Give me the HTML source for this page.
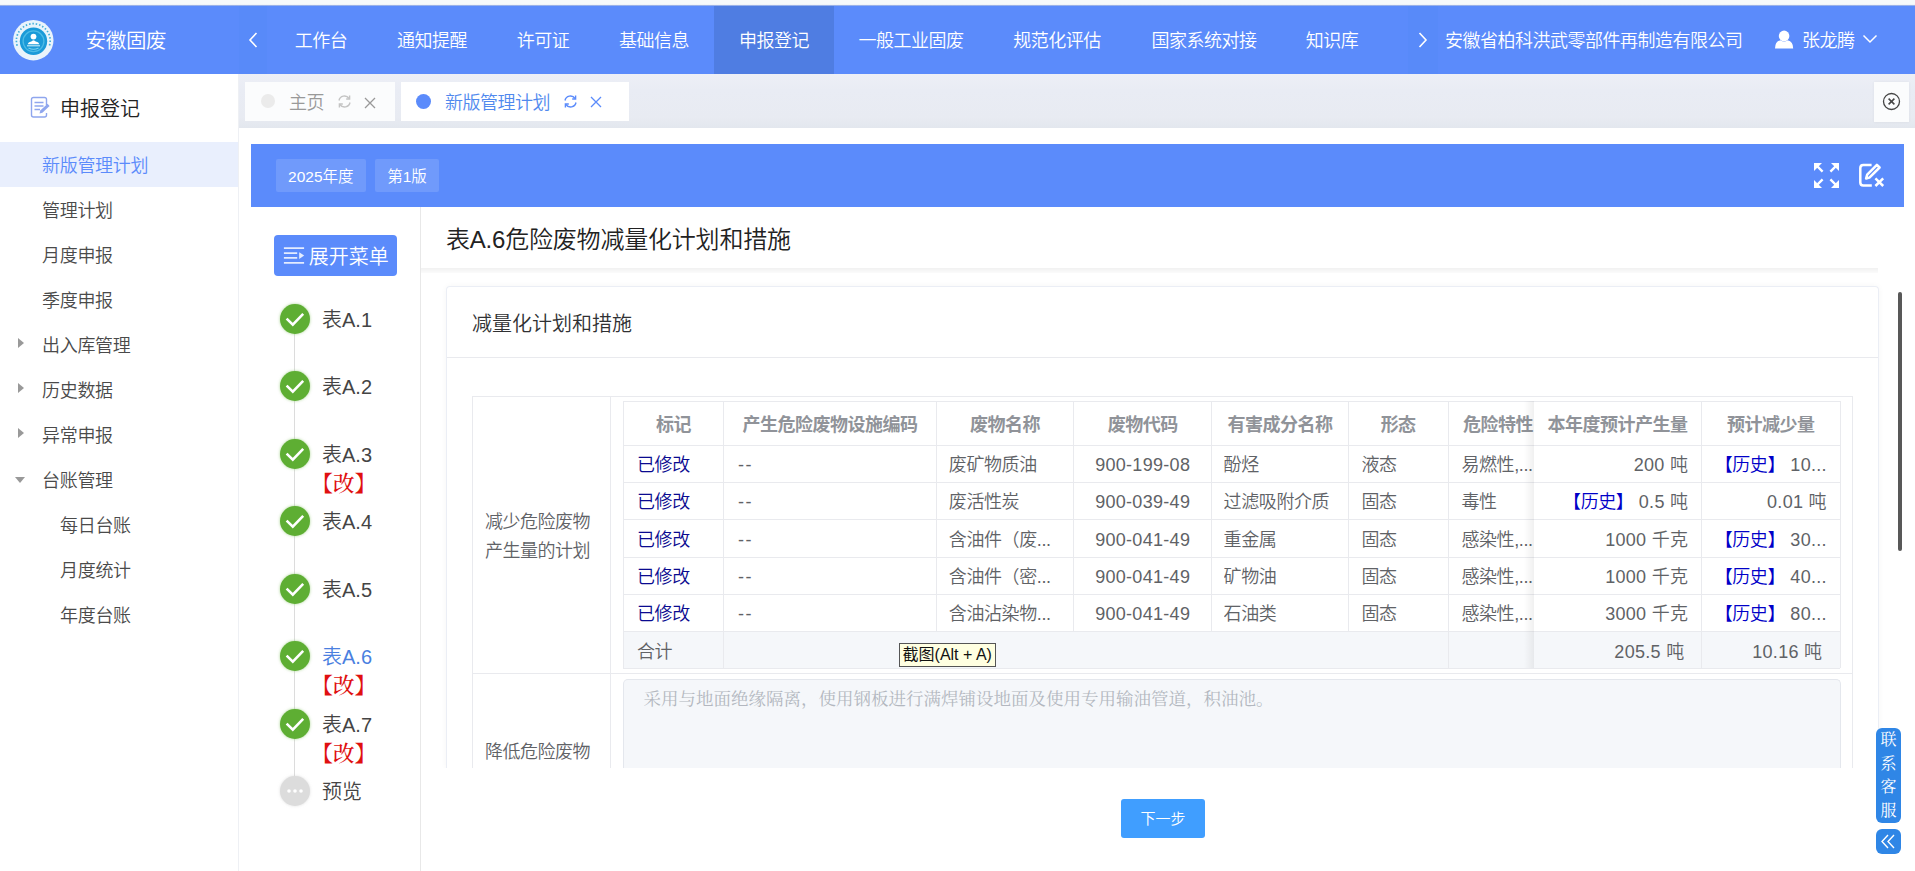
<!DOCTYPE html>
<html lang="zh-CN">
<head>
<meta charset="utf-8">
<title>安徽固废</title>
<style>
*{box-sizing:border-box;margin:0;padding:0}
html,body{width:1915px;height:871px;overflow:hidden;background:#fff}
body{position:relative;font-family:"Liberation Sans","Noto Sans CJK SC",sans-serif;font-size:18px;color:#333;font-weight:350}
.abs{position:absolute;white-space:nowrap}
/* top strip */
#strip{left:0;top:0;width:1915px;height:6px;background:linear-gradient(#f6f9fb 0,#f6f9fb 4.4px,#c3cbdc 5.3px,#5b8bfb 5.8px)}
/* header */
#hdr{left:0;top:6px;width:1915px;height:68px;background:#5b8bfb}
#hdr .t{position:absolute;top:1px;height:68px;line-height:68px;color:#fff;font-size:18px;letter-spacing:-0.5px;white-space:nowrap}
#hdr .nav{transform:translateX(-50%)}
#navact{left:714px;top:0;width:120px;height:68px;background:#4f7de2}
#larr{left:239px;top:0;width:28px;height:68px;background:#588af9}
#rarr{left:1408px;top:0;width:30px;height:68px;background:#588af9}
/* sidebar */
#side{left:0;top:74px;width:239px;height:797px;background:#fff;border-right:1px solid #eef0f4}
#side .it{position:absolute;left:42px;height:45px;line-height:45px;margin-top:2px;font-size:18px;letter-spacing:-0.3px;color:#4a4a4a;white-space:nowrap}
#side .sub{left:60px}
#side .tri{position:absolute;left:17.5px;width:0;height:0}
#sideact{left:0;top:68px;width:238px;height:45px;background:#e9effd}
/* tab bar */
#tabs{left:239px;top:74px;width:1676px;height:54px;background:linear-gradient(#edeff6 0,#e9ecf4 30%,#e8ebf2 80%,#e3e7ee 100%)}
.tab{position:absolute;top:8px;height:39px;background:#fff}
/* banner */
#banner{left:251px;top:144px;width:1653px;height:63px;background:#5b8bfb}
.tag{position:absolute;top:15.3px;height:32.7px;line-height:35px;background:rgba(255,255,255,.13);color:#fff;font-size:15.5px;text-align:center;border-radius:2px}
/* steps */
#steps{left:251px;top:207px;width:170px;height:664px;border-right:1px solid #e8e8e8}
.ck{position:absolute;left:28.8px;width:30px;height:30px;border-radius:50%;background:#5eae33;box-shadow:0 0 3px rgba(94,174,51,.55)}
.ck svg{position:absolute;left:0;top:0}
.sl{position:absolute;left:71px;font-size:20px;color:#444;line-height:26px;white-space:nowrap}
.gai{position:absolute;left:60.5px;margin-top:1px;font-family:"Liberation Serif","Noto Serif CJK SC",serif;font-weight:500;font-size:21.5px;color:#e01010;line-height:24px;white-space:nowrap}
/* main */
.th{position:absolute;height:41px;line-height:41px;font-weight:700;color:#909399;font-size:18px;letter-spacing:-0.5px;text-align:center;white-space:nowrap;overflow:hidden}
.td{position:absolute;height:37px;line-height:37px;font-size:18px;letter-spacing:-0.4px;color:#606266;white-space:nowrap;overflow:hidden}
.num{letter-spacing:0.45px}
.num .blue{letter-spacing:-0.4px}
.lbl{font-size:18px;letter-spacing:-0.5px;line-height:29.1px;color:#606266}
.num{letter-spacing:0.45px}
.num .blue{letter-spacing:-0.4px}
.lbl{font-size:18px;letter-spacing:-0.5px;line-height:29.1px;color:#606266}
.num{letter-spacing:0.45px}
.num .blue{letter-spacing:-0.4px}
.lbl{font-size:18px;letter-spacing:-0.5px;line-height:29.1px;color:#606266}
.num{letter-spacing:0.3px}
.num .blue{letter-spacing:-0.4px}
.lbl{font-size:18px;letter-spacing:-0.5px;line-height:29.1px;color:#606266}
.vl{position:absolute;width:1px;background:#e9eaee}
.hl{position:absolute;height:1px;background:#e9eaee}
.blue{color:#0000c8}
</style>
</head>
<body>
<div id="strip" class="abs"></div>

<!-- HEADER -->
<div id="hdr" class="abs">
  <div id="navact" class="abs"></div>
  <div id="larr" class="abs"></div>
  <div id="rarr" class="abs"></div>
  <svg class="abs" style="left:12px;top:13px" width="43" height="43" viewBox="0 0 43 43">
    <circle cx="21.3" cy="21.2" r="20.2" fill="#e9f4fb"/>
    <circle cx="21.3" cy="21.6" r="16.9" fill="none" stroke="#43afdb" stroke-width="1.7" stroke-dasharray="1.5 1.9"/>
    <path d="M5.5 27.5 A16.9 16.9 0 0 0 37.1 27.5" fill="none" stroke="#e9f4fb" stroke-width="3.4"/>
    <circle cx="21.5" cy="22.3" r="13.7" fill="#1a9ad8"/>
    <circle cx="21.5" cy="22.3" r="10.4" fill="none" stroke="#4dbbe6" stroke-width="1.3"/>
    <circle cx="21.5" cy="17.6" r="2.9" fill="#fff"/>
    <path d="M15.6 25.2 Q16.8 22.2 19 22.8 Q21.5 19.8 24 22.8 Q26.2 22.2 27.4 25.2 Z" fill="#fff"/>
    <path d="M15 26.8 H28" stroke="#c9ecf8" stroke-width="1.1"/>
    <path d="M16.5 29 Q21.5 31.5 26.5 29" stroke="#7fd2ee" stroke-width="1.2" fill="none"/>
  </svg>
  <div class="t" style="left:85.5px;font-size:20.5px;letter-spacing:-0.3px">安徽固废</div>
  <svg class="abs" style="left:246px;top:24px" width="14" height="20" viewBox="0 0 14 20"><path d="M10.5 3 L4 10 L10.5 17" fill="none" stroke="#fff" stroke-width="1.6"/></svg>
  <div class="t nav" style="left:321px">工作台</div>
  <div class="t nav" style="left:432px">通知提醒</div>
  <div class="t nav" style="left:543px">许可证</div>
  <div class="t nav" style="left:654px">基础信息</div>
  <div class="t nav" style="left:774px">申报登记</div>
  <div class="t nav" style="left:911px">一般工业固废</div>
  <div class="t nav" style="left:1057px">规范化评估</div>
  <div class="t nav" style="left:1204px">国家系统对接</div>
  <div class="t nav" style="left:1332px">知识库</div>
  <svg class="abs" style="left:1416px;top:24px" width="14" height="20" viewBox="0 0 14 20"><path d="M3.5 3 L10 10 L3.5 17" fill="none" stroke="#fff" stroke-width="1.6"/></svg>
  <div class="t" style="left:1445px">安徽省柏科洪武零部件再制造有限公司</div>
  <svg class="abs" style="left:1774px;top:23px" width="20" height="21" viewBox="0 0 20 21"><circle cx="10.1" cy="6.9" r="5.3" fill="#fff"/><path d="M1 19.6 Q1 12.4 6.5 11.2 Q10.1 13.6 13.7 11.2 Q19.2 12.4 19.2 19.6 Z" fill="#fff"/></svg>
  <div class="t" style="left:1802px">张龙腾</div>
  <svg class="abs" style="left:1862px;top:28px" width="16" height="10" viewBox="0 0 16 10"><path d="M1.5 1.5 L8 8 L14.5 1.5" fill="none" stroke="#fff" stroke-width="1.5"/></svg>
</div>

<!-- SIDEBAR -->
<div id="side" class="abs">
  <svg class="abs" style="left:30px;top:22px" width="22" height="23" viewBox="0 0 22 23">
    <path d="M16.5 9 V3.5 Q16.5 1.5 14.5 1.5 H3.5 Q1.5 1.5 1.5 3.5 V19 Q1.5 21 3.5 21 H14.5 Q16.5 21 16.5 19 V17" fill="none" stroke="#8fa6ee" stroke-width="1.4"/>
    <path d="M4.5 6.5 H13.5 M4.5 10 H13.5 M4.5 13.5 H10" stroke="#8fa6ee" stroke-width="1.4"/>
    <path d="M9.5 17.5 L10.3 14.6 L17.5 7.8 L19.6 9.9 L12.4 16.8 Z" fill="#8fa6ee"/>
  </svg>
  <div class="abs" style="left:60px;top:19px;font-size:20px;line-height:32px;color:#222">申报登记</div>
  <div id="sideact" class="abs"></div>
  <div class="it" style="top:68px;color:#5b8bfb">新版管理计划</div>
  <div class="it" style="top:113px">管理计划</div>
  <div class="it" style="top:158px">月度申报</div>
  <div class="it" style="top:203px">季度申报</div>
  <div class="it" style="top:248px">出入库管理</div>
  <div class="it" style="top:293px">历史数据</div>
  <div class="it" style="top:338px">异常申报</div>
  <div class="it" style="top:383px">台账管理</div>
  <div class="it sub" style="top:428px">每日台账</div>
  <div class="it sub" style="top:473px">月度统计</div>
  <div class="it sub" style="top:518px">年度台账</div>
  <div class="tri" style="top:264px;border-left:6px solid #999;border-top:5px solid transparent;border-bottom:5px solid transparent"></div>
  <div class="tri" style="top:309px;border-left:6px solid #999;border-top:5px solid transparent;border-bottom:5px solid transparent"></div>
  <div class="tri" style="top:354px;border-left:6px solid #999;border-top:5px solid transparent;border-bottom:5px solid transparent"></div>
  <div class="tri" style="top:403px;left:15px;border-top:6px solid #999;border-left:5px solid transparent;border-right:5px solid transparent"></div>
</div>

<!-- TABS -->
<div id="tabs" class="abs">
  <div class="tab" style="left:6px;width:150px;background:#fbfcfd">
    <div class="abs" style="left:16px;top:12px;width:14px;height:14px;border-radius:50%;background:#ebebeb"></div>
    <div class="abs" style="left:44px;top:1.5px;line-height:39px;font-size:18px;letter-spacing:-0.5px;color:#999">主页</div>
    <svg class="abs" style="left:92px;top:12px" width="15" height="15" viewBox="0 0 15 15"><path d="M2 6.5 A5.5 5.5 0 0 1 12 4.5 M13 8.5 A5.5 5.5 0 0 1 3 10.5" fill="none" stroke="#c4c4c4" stroke-width="1.4"/><path d="M12.6 1.5 V5 H9.2 M2.4 13.5 V10 H5.8" fill="none" stroke="#c4c4c4" stroke-width="1.4"/></svg>
    <svg class="abs" style="left:119px;top:14.5px" width="12" height="12" viewBox="0 0 12 12"><path d="M1 1 L11 11 M11 1 L1 11" stroke="#999" stroke-width="1.3"/></svg>
  </div>
  <div class="tab" style="left:162px;width:228px">
    <div class="abs" style="left:15px;top:12px;width:15px;height:15px;border-radius:50%;background:#5b8bfb"></div>
    <div class="abs" style="left:44px;top:1.5px;line-height:39px;font-size:18px;letter-spacing:-0.5px;color:#5089ee">新版管理计划</div>
    <svg class="abs" style="left:162px;top:12px" width="15" height="15" viewBox="0 0 15 15"><path d="M2 6.5 A5.5 5.5 0 0 1 12 4.5 M13 8.5 A5.5 5.5 0 0 1 3 10.5" fill="none" stroke="#5b8bfb" stroke-width="1.4"/><path d="M12.6 1.5 V5 H9.2 M2.4 13.5 V10 H5.8" fill="none" stroke="#5b8bfb" stroke-width="1.4"/></svg>
    <svg class="abs" style="left:189px;top:14px" width="12" height="12" viewBox="0 0 12 12"><path d="M1 1 L11 11 M11 1 L1 11" stroke="#5b8bfb" stroke-width="1.3"/></svg>
  </div>
  <div class="tab" style="left:1635px;top:7.5px;height:40px;width:35px;background:#fbfcfd;box-shadow:0 0 3px rgba(0,0,0,.06)">
    <svg class="abs" style="left:8px;top:10px" width="19" height="19" viewBox="0 0 19 19"><circle cx="9.5" cy="9.5" r="8" fill="none" stroke="#444" stroke-width="1.3"/><path d="M6.6 6.6 L12.4 12.4 M12.4 6.6 L6.6 12.4" stroke="#444" stroke-width="1.5"/></svg>
  </div>
</div>

<!-- BANNER -->
<div id="banner" class="abs">
  <div class="tag" style="left:24.8px;width:90px">2025年度</div>
  <div class="tag" style="left:124px;width:64px">第1版</div>
  <svg class="abs" style="left:1562px;top:18px" width="27" height="27" viewBox="0 0 27 27">
    <g fill="#fff" stroke="none">
      <path d="M1 1 H9 L1 9 Z"/><path d="M26 1 V9 L18 1 Z"/><path d="M1 26 V18 L9 26 Z"/><path d="M26 26 H18 L26 18 Z"/>
    </g>
    <g fill="none" stroke="#fff" stroke-width="2.4">
      <path d="M3 3 L9.6 9.6 M24 3 L17.4 9.6 M3 24 L9.6 17.4 M24 24 L17.4 17.4"/>
    </g>
  </svg>
  <svg class="abs" style="left:1605px;top:16px" width="32" height="30" viewBox="0 0 32 30">
    <g fill="none" stroke="#fff" stroke-width="2.5" stroke-linejoin="round">
      <path d="M15.6 5.1 H7.3 Q4.3 5.1 4.3 8.1 V22.5 Q4.3 25.5 7.3 25.5 H15.8"/>
      <path d="M20.9 4.8 L23.6 7.5 L13.4 17.6 L10.1 18.5 L11.2 14.6 Z"/>
      <path d="M19.4 18.4 L27.2 26 M27.2 18.4 L19.4 26"/>
    </g>
  </svg>
</div>

<!-- STEPS -->
<div id="steps" class="abs">
  <div class="abs" style="left:43px;top:112px;width:1px;height:472px;background:#dcdcdc"></div>
  <div class="abs" style="left:23px;top:28px;width:122.8px;height:41px;border-radius:4px;background:#5b8bfb"></div>
  <svg class="abs" style="left:32px;top:39px" width="23" height="19" viewBox="0 0 23 19"><path d="M0.9 2.1 H21.1 M0.9 7.1 H14.2 M0.9 11.9 H14.2 M0.9 16.9 H21.1" stroke="#e3ecff" stroke-width="1.7"/><path d="M16.2 6.2 L21.2 9.6 L16.2 13 Z" fill="#e3ecff"/></svg>
  <div class="abs" style="left:57.8px;top:30.3px;line-height:40px;font-size:20px;color:#fff">展开菜单</div>
  <div class="ck" style="top:97px"><svg width="30" height="30" viewBox="0 0 30 30"><path d="M6.6 14.6 L12.8 20.6 L23.2 9.9" fill="none" stroke="#fff" stroke-width="2.6"/></svg></div>
  <div class="sl" style="top:100px">表A.1</div>
  <div class="ck" style="top:164px"><svg width="30" height="30" viewBox="0 0 30 30"><path d="M6.6 14.6 L12.8 20.6 L23.2 9.9" fill="none" stroke="#fff" stroke-width="2.6"/></svg></div>
  <div class="sl" style="top:167px">表A.2</div>
  <div class="ck" style="top:232px"><svg width="30" height="30" viewBox="0 0 30 30"><path d="M6.6 14.6 L12.8 20.6 L23.2 9.9" fill="none" stroke="#fff" stroke-width="2.6"/></svg></div>
  <div class="sl" style="top:235px">表A.3</div>
  <div class="gai" style="top:264px">【改】</div>
  <div class="ck" style="top:299px"><svg width="30" height="30" viewBox="0 0 30 30"><path d="M6.6 14.6 L12.8 20.6 L23.2 9.9" fill="none" stroke="#fff" stroke-width="2.6"/></svg></div>
  <div class="sl" style="top:302px">表A.4</div>
  <div class="ck" style="top:367px"><svg width="30" height="30" viewBox="0 0 30 30"><path d="M6.6 14.6 L12.8 20.6 L23.2 9.9" fill="none" stroke="#fff" stroke-width="2.6"/></svg></div>
  <div class="sl" style="top:370px">表A.5</div>
  <div class="ck" style="top:434px"><svg width="30" height="30" viewBox="0 0 30 30"><path d="M6.6 14.6 L12.8 20.6 L23.2 9.9" fill="none" stroke="#fff" stroke-width="2.6"/></svg></div>
  <div class="sl" style="top:437px;color:#4a7fe0">表A.6</div>
  <div class="gai" style="top:466px">【改】</div>
  <div class="ck" style="top:502px"><svg width="30" height="30" viewBox="0 0 30 30"><path d="M6.6 14.6 L12.8 20.6 L23.2 9.9" fill="none" stroke="#fff" stroke-width="2.6"/></svg></div>
  <div class="sl" style="top:505px">表A.7</div>
  <div class="gai" style="top:534px">【改】</div>
  <div class="ck" style="top:569px;background:#dcdcdc;box-shadow:0 0 3px rgba(200,200,200,.6)"><svg width="30" height="30" viewBox="0 0 30 30"><circle cx="9" cy="15" r="1.8" fill="#fff"/><circle cx="15" cy="15" r="1.8" fill="#fff"/><circle cx="21" cy="15" r="1.8" fill="#fff"/></svg></div>
  <div class="sl" style="top:572px">预览</div>
</div>

<!-- MAIN -->
<div class="abs" style="left:446px;top:222px;font-size:24px;letter-spacing:-0.2px;line-height:36px;color:#222">表A.6危险废物减量化计划和措施</div>
<div class="abs" style="left:421px;top:268px;width:1457px;height:5px;background:linear-gradient(#f1f1f1,#fbfbfb)"></div>
<div class="abs" style="left:446px;top:285.5px;width:1433px;height:483px;border:1px solid #ebeef5;border-bottom:none;border-radius:4px 4px 0 0;box-shadow:0 0 6px rgba(0,0,0,.04)"></div>
<div class="abs" style="left:472px;top:309px;font-size:20px;line-height:30px;color:#303133">减量化计划和措施</div>
<div class="hl" style="left:447px;top:357px;width:1431px"></div>
<div class="hl" style="left:472px;top:396px;width:1381px"></div>
<div class="vl" style="left:472px;top:396px;height:372px"></div>
<div class="vl" style="left:610px;top:396px;height:372px"></div>
<div class="vl" style="left:1852px;top:396px;height:372px"></div>
<div class="hl" style="left:472px;top:672.5px;width:1381px"></div>
<div class="abs lbl" style="left:485px;top:508px">减少危险废物<br>产生量的计划</div>
<div class="abs lbl" style="left:485px;top:737.5px">降低危险废物</div>
<div class="abs" style="left:623.4px;top:631.4px;width:1217.0px;height:37.1px;background:#f5f7fa"></div>
<div class="hl" style="left:623.4px;top:400.9px;width:1217.0px"></div>
<div class="hl" style="left:623.4px;top:444.8px;width:1217.0px"></div>
<div class="hl" style="left:623.4px;top:482.1px;width:1217.0px"></div>
<div class="hl" style="left:623.4px;top:519.4px;width:1217.0px"></div>
<div class="hl" style="left:623.4px;top:556.7px;width:1217.0px"></div>
<div class="hl" style="left:623.4px;top:593.9px;width:1217.0px"></div>
<div class="hl" style="left:623.4px;top:630.9px;width:1217.0px"></div>
<div class="hl" style="left:623.4px;top:667.5px;width:1217.0px"></div>
<div class="vl" style="left:622.9px;top:400.9px;height:267.1px"></div>
<div class="vl" style="left:723.1px;top:400.9px;height:267.1px"></div>
<div class="vl" style="left:936.0px;top:400.9px;height:230.5px"></div>
<div class="vl" style="left:1073.1px;top:400.9px;height:230.5px"></div>
<div class="vl" style="left:1211.3px;top:400.9px;height:230.5px"></div>
<div class="vl" style="left:1347.7px;top:400.9px;height:230.5px"></div>
<div class="vl" style="left:1447.6px;top:400.9px;height:267.1px"></div>
<div class="vl" style="left:1700.8px;top:400.9px;height:267.1px"></div>
<div class="vl" style="left:1839.9px;top:400.9px;height:267.1px"></div>
<div class="th" style="left:623.4px;top:404.9px;width:100.2px">标记</div>
<div class="th" style="left:723.6px;top:404.9px;width:212.9px">产生危险废物设施编码</div>
<div class="th" style="left:936.5px;top:404.9px;width:137.1px">废物名称</div>
<div class="th" style="left:1073.6px;top:404.9px;width:138.2px">废物代码</div>
<div class="th" style="left:1211.8px;top:404.9px;width:136.4px">有害成分名称</div>
<div class="th" style="left:1348.2px;top:404.9px;width:99.9px">形态</div>
<div class="th" style="left:1448.1px;top:404.9px;width:85.7px;text-align:left;padding-left:15px">危险特性</div>
<div class="td" style="left:637.0px;top:446.9px;width:86.1px;color:#0a0a90">已修改</div>
<div class="td" style="left:738.0px;top:446.9px;width:198.0px;letter-spacing:1.5px">--</div>
<div class="td" style="left:948.8px;top:446.9px;width:124.3px">废矿物质油</div>
<div class="td num" style="left:1073.6px;top:446.9px;width:138.2px;text-align:center">900-199-08</div>
<div class="td" style="left:1223.6px;top:446.9px;width:124.1px">酚烃</div>
<div class="td" style="left:1361.5px;top:446.9px;width:86.1px">液态</div>
<div class="td" style="left:1461.4px;top:446.9px;width:71.9px">易燃性,...</div>
<div class="td" style="left:637.0px;top:484.2px;width:86.1px;color:#0a0a90">已修改</div>
<div class="td" style="left:738.0px;top:484.2px;width:198.0px;letter-spacing:1.5px">--</div>
<div class="td" style="left:948.8px;top:484.2px;width:124.3px">废活性炭</div>
<div class="td num" style="left:1073.6px;top:484.2px;width:138.2px;text-align:center">900-039-49</div>
<div class="td" style="left:1223.6px;top:484.2px;width:124.1px">过滤吸附介质</div>
<div class="td" style="left:1361.5px;top:484.2px;width:86.1px">固态</div>
<div class="td" style="left:1461.4px;top:484.2px;width:71.9px">毒性</div>
<div class="td" style="left:637.0px;top:521.5px;width:86.1px;color:#0a0a90">已修改</div>
<div class="td" style="left:738.0px;top:521.5px;width:198.0px;letter-spacing:1.5px">--</div>
<div class="td" style="left:948.8px;top:521.5px;width:124.3px">含油件（废...</div>
<div class="td num" style="left:1073.6px;top:521.5px;width:138.2px;text-align:center">900-041-49</div>
<div class="td" style="left:1223.6px;top:521.5px;width:124.1px">重金属</div>
<div class="td" style="left:1361.5px;top:521.5px;width:86.1px">固态</div>
<div class="td" style="left:1461.4px;top:521.5px;width:71.9px">感染性,...</div>
<div class="td" style="left:637.0px;top:558.8px;width:86.1px;color:#0a0a90">已修改</div>
<div class="td" style="left:738.0px;top:558.8px;width:198.0px;letter-spacing:1.5px">--</div>
<div class="td" style="left:948.8px;top:558.8px;width:124.3px">含油件（密...</div>
<div class="td num" style="left:1073.6px;top:558.8px;width:138.2px;text-align:center">900-041-49</div>
<div class="td" style="left:1223.6px;top:558.8px;width:124.1px">矿物油</div>
<div class="td" style="left:1361.5px;top:558.8px;width:86.1px">固态</div>
<div class="td" style="left:1461.4px;top:558.8px;width:71.9px">感染性,...</div>
<div class="td" style="left:637.0px;top:596.0px;width:86.1px;color:#0a0a90">已修改</div>
<div class="td" style="left:738.0px;top:596.0px;width:198.0px;letter-spacing:1.5px">--</div>
<div class="td" style="left:948.8px;top:596.0px;width:124.3px">含油沾染物...</div>
<div class="td num" style="left:1073.6px;top:596.0px;width:138.2px;text-align:center">900-041-49</div>
<div class="td" style="left:1223.6px;top:596.0px;width:124.1px">石油类</div>
<div class="td" style="left:1361.5px;top:596.0px;width:86.1px">固态</div>
<div class="td" style="left:1461.4px;top:596.0px;width:71.9px">感染性,...</div>
<div class="td" style="left:637px;top:633.7px;width:80px">合计</div>
<div class="abs" style="left:1523.8px;top:400.9px;width:10px;height:267.1px;background:linear-gradient(to right,rgba(0,0,0,0),rgba(0,0,0,.06))"></div>
<div class="abs" style="left:1533.8px;top:400.9px;width:306.6px;height:230.5px;background:#fff"></div>
<div class="abs" style="left:1533.8px;top:631.4px;width:306.6px;height:37.1px;background:#f5f7fa"></div>
<div class="hl" style="left:1533.8px;top:400.9px;width:306.6px"></div>
<div class="hl" style="left:1533.8px;top:444.8px;width:306.6px"></div>
<div class="hl" style="left:1533.8px;top:482.1px;width:306.6px"></div>
<div class="hl" style="left:1533.8px;top:519.4px;width:306.6px"></div>
<div class="hl" style="left:1533.8px;top:556.7px;width:306.6px"></div>
<div class="hl" style="left:1533.8px;top:593.9px;width:306.6px"></div>
<div class="hl" style="left:1533.8px;top:630.9px;width:306.6px"></div>
<div class="hl" style="left:1533.8px;top:667.5px;width:306.6px"></div>
<div class="vl" style="left:1700.8px;top:400.9px;height:267.1px"></div>
<div class="vl" style="left:1839.9px;top:400.9px;height:267.1px"></div>
<div class="th" style="left:1533.8px;top:404.9px;width:167.5px">本年度预计产生量</div>
<div class="th" style="left:1701.3px;top:404.9px;width:139.1px">预计减少量</div>
<div class="td num" style="left:1533.8px;top:446.9px;width:154.5px;text-align:right">200 吨</div>
<div class="td num" style="left:1705.3px;top:446.9px;width:121.6px;text-align:right"><span class="blue">【历史】</span> 10...</div>
<div class="td num" style="left:1533.8px;top:484.2px;width:154.5px;text-align:right"><span class="blue">【历史】</span> 0.5 吨</div>
<div class="td num" style="left:1705.3px;top:484.2px;width:121.6px;text-align:right">0.01 吨</div>
<div class="td num" style="left:1533.8px;top:521.5px;width:154.5px;text-align:right">1000 千克</div>
<div class="td num" style="left:1705.3px;top:521.5px;width:121.6px;text-align:right"><span class="blue">【历史】</span> 30...</div>
<div class="td num" style="left:1533.8px;top:558.8px;width:154.5px;text-align:right">1000 千克</div>
<div class="td num" style="left:1705.3px;top:558.8px;width:121.6px;text-align:right"><span class="blue">【历史】</span> 40...</div>
<div class="td num" style="left:1533.8px;top:596.0px;width:154.5px;text-align:right">3000 千克</div>
<div class="td num" style="left:1705.3px;top:596.0px;width:121.6px;text-align:right"><span class="blue">【历史】</span> 80...</div>
<div class="td num" style="left:1533.8px;top:633.7px;width:150.7px;text-align:right">205.5 吨</div>
<div class="td num" style="left:1701.3px;top:633.7px;width:121.1px;text-align:right">10.16 吨</div>
<div class="abs" style="left:623px;top:678.5px;width:1217.5px;height:90px;background:#f5f7fa;border:1px solid #e4e7ed;border-bottom:none;border-radius:5px 5px 0 0"></div>
<div class="abs" style="left:643.5px;top:686px;font-family:'Liberation Serif','Noto Serif CJK SC',serif;font-weight:400;font-size:17.5px;line-height:26px;color:#b3b7bf">采用与地面绝缘隔离，使用钢板进行满焊铺设地面及使用专用输油管道，积油池。</div>
<div class="abs" style="left:422px;top:767.7px;width:1493px;height:104px;background:#fff"></div>
<div class="abs" style="left:898.5px;top:643px;width:97.5px;height:23.5px;background:#ffffe1;border:1px solid #555;font-size:16px;line-height:22px;text-align:center;color:#111;font-weight:400">截图(Alt + A)</div>
<div class="abs" style="left:1121px;top:799px;width:84px;height:39px;background:#409eff;border-radius:3px;color:#fff;font-size:15px;line-height:39px;text-align:center">下一步</div>
<div class="abs" style="left:1897.5px;top:292px;width:4px;height:259px;background:#585858;border-radius:2px"></div>
<div class="abs" style="left:1876px;top:728px;width:25px;height:94.5px;background:#2f86e6;border-radius:6px;color:#fff;font-family:'Liberation Serif','Noto Serif CJK SC',serif;font-weight:400;font-size:16px;line-height:23.5px;text-align:center;white-space:normal">联<br>系<br>客<br>服</div>
<div class="abs" style="left:1876px;top:829px;width:25px;height:25px;background:#2f86e6;border-radius:6px"><svg width="25" height="25" viewBox="0 0 25 25"><path d="M12 6 L6 12.5 L12 19 M18 6 L12 12.5 L18 19" fill="none" stroke="#fff" stroke-width="1.4"/></svg></div>
</body>
</html>
